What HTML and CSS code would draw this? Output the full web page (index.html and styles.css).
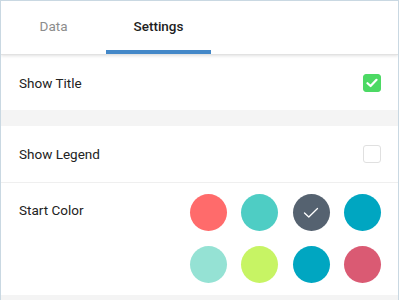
FILE: index.html
```html
<!DOCTYPE html>
<html lang="en">
<head>
    <meta charset="UTF-8">
    <meta name="viewport" content="width=device-width, initial-scale=1.0">
    <title>Chart Settings</title>
    <link rel="stylesheet" href="styles.css">
</head>
<body>
    <div class="panel">
        <div class="tabs">
            <div class="tab">Data</div>
            <div class="tab active">Settings</div>
        </div>

        <div class="row">
            <span class="label">Show Title</span>
            <span class="checkbox checked">
                <svg width="12" height="10" viewBox="0 0 12 10"><path d="M1.5 5.2 L4.6 8 L10.5 1.8" fill="none" stroke="#fff" stroke-width="2.2" stroke-linecap="round" stroke-linejoin="round"/></svg>
            </span>
        </div>

        <div class="spacer"></div>

        <div class="row divided">
            <span class="label">Show Legend</span>
            <span class="checkbox"></span>
        </div>

        <div class="color-row">
            <span class="label">Start Color</span>
            <div class="swatches">
                <span class="swatch red"></span>
                <span class="swatch teal"></span>
                <span class="swatch slate selected">
                    <svg width="16" height="12" viewBox="0 0 16 12"><path d="M1.5 6 L5.8 10 L14.5 1.5" fill="none" stroke="#fff" stroke-width="1.3" stroke-linecap="round" stroke-linejoin="round"/></svg>
                </span>
                <span class="swatch blue"></span>
                <span class="swatch mint"></span>
                <span class="swatch lime"></span>
                <span class="swatch blue"></span>
                <span class="swatch rose"></span>
            </div>
        </div>

        <div class="footer-band"></div>
    </div>
</body>
</html>
```

FILE: styles.css
```css
body {
    margin: 0;
    font-family: Roboto, "Liberation Sans", sans-serif;
    background-color: #fff;
}
.panel {
    width: 399px;
    height: 300px;
    box-sizing: border-box;
    border: 1px solid #c9d8e2;
    border-bottom: none;
    display: flex;
    flex-direction: column;
    overflow: hidden;
}
.tabs {
    display: flex;
    height: 53px;
    flex-shrink: 0;
    border-bottom: 1px solid #e2e2e2;
    box-shadow: 0 1px 3px rgba(0, 0, 0, 0.12);
    position: relative;
    z-index: 1;
}
.tab {
    width: 105px;
    box-sizing: border-box;
    text-align: center;
    font-size: 13.5px;
    color: #8c8c8c;
    padding-top: 17px;
    border-bottom: 4px solid transparent;
}
.tab.active {
    color: #1e1e1e;
    font-weight: 500;
    border-bottom-color: #4488c8;
}
.row {
    display: flex;
    align-items: center;
    justify-content: space-between;
    height: 55px;
    flex-shrink: 0;
    padding: 0 17px 0 18px;
}
.row.divided {
    height: 57px;
    box-sizing: border-box;
    border-bottom: 1px solid #efefef;
}
.label {
    font-size: 13.5px;
    color: #222;
}
.spacer {
    height: 16px;
    flex-shrink: 0;
    background-color: #f4f4f4;
}
.checkbox {
    width: 18px;
    height: 18px;
    box-sizing: border-box;
    border: 1.5px solid #e0e0e0;
    border-radius: 3px;
    display: flex;
    align-items: center;
    justify-content: center;
}
.checkbox.checked {
    background-color: #4cd964;
    border-color: #4cd964;
}
.color-row {
    flex: 1;
    display: flex;
    justify-content: space-between;
    align-items: flex-start;
    padding: 11px 17px 0 18px;
}
.color-row .label {
    line-height: 33px;
}
.swatches {
    display: grid;
    grid-template-columns: repeat(4, 37px);
    column-gap: 14.5px;
    row-gap: 15px;
}
.swatch {
    width: 37px;
    height: 37px;
    border-radius: 50%;
    display: flex;
    align-items: center;
    justify-content: center;
}
.red { background-color: #ff6b6b; }
.teal { background-color: #4ecdc4; }
.slate { background-color: #556270; }
.blue { background-color: #00a6c1; }
.mint { background-color: #95e2d4; }
.lime { background-color: #c7f464; }
.rose { background-color: #da5a73; }
.footer-band {
    height: 5px;
    flex-shrink: 0;
    background-color: #f4f4f4;
}
```
